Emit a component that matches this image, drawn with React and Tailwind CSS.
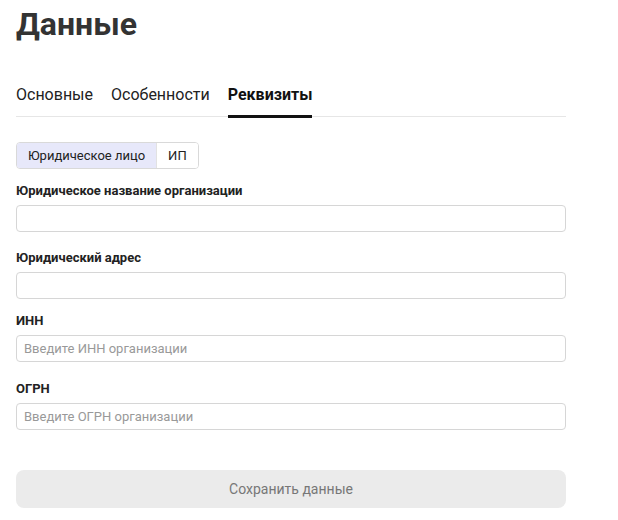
import { useState } from "react";

const TABS = ["Основные", "Особенности", "Реквизиты"];

const FIELDS = [
  { label: "Юридическое название организации", placeholder: "", space: "" },
  { label: "Юридический адрес", placeholder: "", space: "mt-[18px]" },
  { label: "ИНН", placeholder: "Введите ИНН организации", space: "mt-[14px]" },
  { label: "ОГРН", placeholder: "Введите ОГРН организации", space: "mt-[19px]" },
];

export default function App() {
  const [tab, setTab] = useState("Реквизиты");
  const [kind, setKind] = useState("legal");

  return (
    <div className="bg-white min-h-[520px] px-4 text-[#222]" style={{ fontFamily: "Roboto, 'Open Sans', sans-serif" }}>
      <h1 className="pt-[2px] text-[32px] leading-[44px] font-bold text-[#333]">Данные</h1>

      <div className="mt-[38px] w-[550px] flex gap-[18px] border-b border-[#e6e6e6]">
        {TABS.map((t) => (
          <button
            key={t}
            onClick={() => setTab(t)}
            className={
              "pb-[9px] text-[16px] leading-[22px] border-b-[3px] -mb-[2px] " +
              (tab === t ? "font-bold border-[#111] text-[#111]" : "border-transparent text-[#222]")
            }
          >
            {t}
          </button>
        ))}
      </div>

      <div className="mt-[25px] inline-flex border border-[#d9d9d9] rounded-[4px] overflow-hidden text-[13px] leading-[25px]">
        <button
          onClick={() => setKind("legal")}
          className={"px-[11px] " + (kind === "legal" ? "bg-[#e7e8fa]" : "bg-white")}
        >
          Юридическое лицо
        </button>
        <button
          onClick={() => setKind("ip")}
          className={"px-[11px] border-l border-[#e2e2e2] " + (kind === "ip" ? "bg-[#e7e8fa]" : "bg-white")}
        >
          ИП
        </button>
      </div>

      <div className="w-[550px] mt-[14px] flex flex-col">
        {FIELDS.map((f) => (
          <label key={f.label} className={"flex flex-col gap-[6px] " + f.space}>
            <span className="text-[13px] leading-[16px] font-bold text-[#222]">{f.label}</span>
            <input
              placeholder={f.placeholder}
              className="h-[27px] px-[7px] rounded-[4px] border border-[#d6d6d6] text-[13px] placeholder:text-[#999] outline-none"
            />
          </label>
        ))}
      </div>

      <button className="mt-[40px] w-[550px] h-[38px] rounded-[8px] bg-[#ebebeb] text-[14px] text-[#777]">
        Сохранить данные
      </button>
    </div>
  );
}
